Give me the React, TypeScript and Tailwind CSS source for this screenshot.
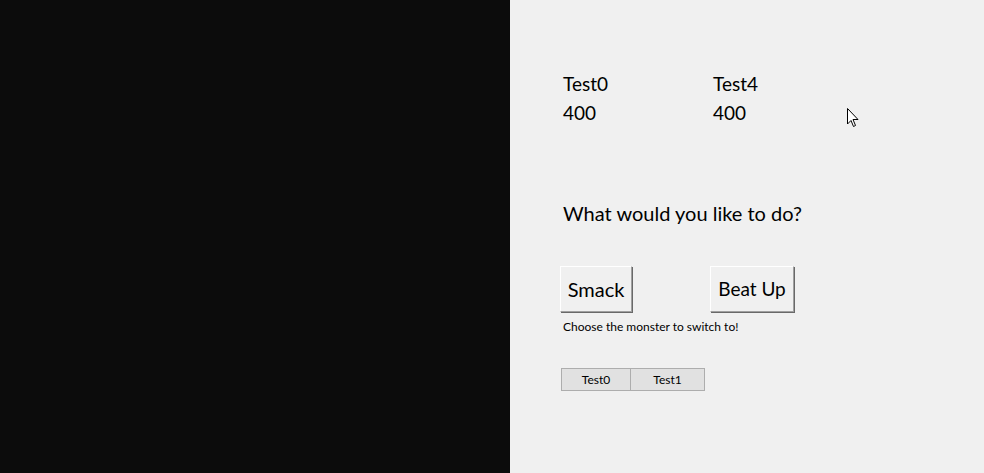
export default function App() {
  return (
    <div className="flex h-[473px] w-[984px] overflow-hidden font-['Lato','Noto_Sans',sans-serif] text-black">
      <div className="w-[510px] bg-[#0c0c0c]" />
      <div className="relative flex-1 bg-[#f0f0f0] pl-[50px] pt-[69px]">
        {/* Stats */}
        <div className="grid grid-cols-[150px_150px] pl-[3px] text-[19px] leading-[29px]">
          <div>
            <div>Test0</div>
            <div>400</div>
          </div>
          <div>
            <div>Test4</div>
            <div>400</div>
          </div>
        </div>

        <div className="mt-[71px] pl-[3px] text-[20px] leading-[30px]">What would you like to do?</div>

        {/* Actions */}
        <div className="mt-[38px] flex gap-[78px]">
          <button className="h-[46px] w-[72px] border border-t-white border-l-white border-r-[#a0a0a0] border-b-[#a0a0a0] bg-[#f0f0f0] text-[20px] shadow-[1px_1px_0_#696969]">
            Smack
          </button>
          <button className="h-[46px] w-[84px] border border-t-white border-l-white border-r-[#a0a0a0] border-b-[#a0a0a0] bg-[#f0f0f0] text-[19px] shadow-[1px_1px_0_#696969]">
            Beat Up
          </button>
        </div>
        <div className="mt-[7px] pl-[3px] text-[12px] leading-[16px]">Choose the monster to switch to!</div>

        {/* Switch */}
        <div className="mt-[33px] flex pl-[1px] text-[12px]">
          <button className="h-[23px] w-[70px] border border-[#adadad] bg-[#e1e1e1]">Test0</button>
          <button className="h-[23px] w-[74px] border border-l-0 border-[#adadad] bg-[#e1e1e1]">Test1</button>
        </div>

        {/* Cursor */}
        <svg className="absolute left-[337px] top-[108px]" width="13" height="20" viewBox="0 0 13 20">
          <path d="M0.5 0.5 L0.5 16 L4 12.5 L6.5 18.5 L8.5 17.5 L6 11.5 L11 11.5 Z" fill="white" stroke="black" strokeWidth="1" />
        </svg>
      </div>
    </div>
  )
}
